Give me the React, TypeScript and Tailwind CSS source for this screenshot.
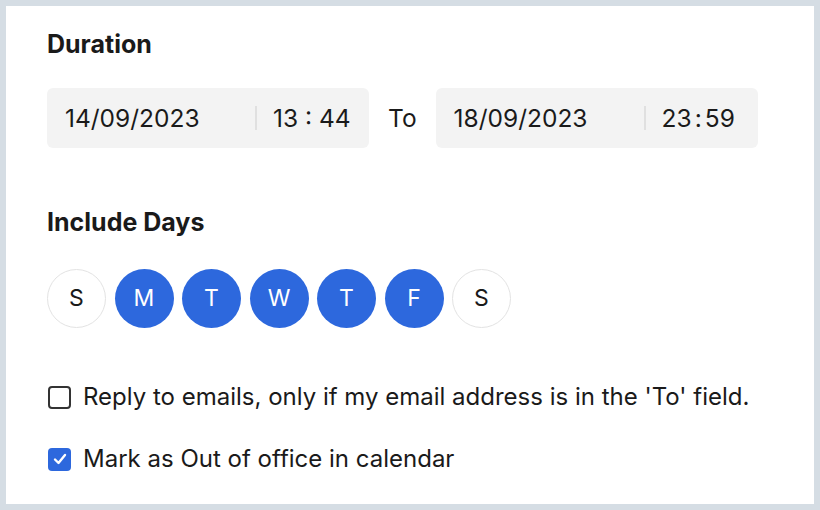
import React from "react";

const days = [
  { label: "S", on: false },
  { label: "M", on: true },
  { label: "T", on: true },
  { label: "W", on: true },
  { label: "T", on: true },
  { label: "F", on: true },
  { label: "S", on: false },
];

function DateField({ date, time }: { date: string; time: React.ReactNode }) {
  return (
    <div className="flex items-center w-[322px] h-[60px] rounded-[6px] bg-[#f3f3f3] pl-[18px] text-[24.5px] text-[#1a1a1a]">
      <span className="w-[190px]">{date}</span>
      <span className="w-[2px] h-[24px] bg-[#e0e0e0]" />
      <span className="pl-[16px]">{time}</span>
    </div>
  );
}

export default function App() {
  return (
    <div
      className="w-[820px] h-[510px] bg-[#d5dde4] p-[6px]"
      style={{ fontFamily: "Inter, 'Noto Sans', sans-serif" }}
    >
      <div className="h-full bg-white pl-[41px] pt-[22px]">
        <h2 className="text-[25px] font-bold text-[#1a1a1a] leading-[32px]">Duration</h2>
        <div className="flex items-center mt-[28px]">
          <DateField date="14/09/2023" time="13 : 44" />
          <span className="mx-[19px] text-[24.5px] text-[#1a1a1a]">To</span>
          <DateField
            date="18/09/2023"
            time={
              <>
                23<span className="mx-[3px]">:</span>59
              </>
            }
          />
        </div>

        <h2 className="mt-[58px] text-[25px] font-bold text-[#1a1a1a] leading-[32px]">Include Days</h2>
        <div className="flex gap-[8.5px] mt-[31px]">
          {days.map((d, i) => (
            <div
              key={i}
              className={
                d.on
                  ? "w-[59px] h-[59px] rounded-full bg-[#2d68dd] text-white flex items-center justify-center text-[23px]"
                  : "w-[59px] h-[59px] rounded-full border border-[#e3e3e3] text-[#1a1a1a] flex items-center justify-center text-[23px]"
              }
            >
              {d.label}
            </div>
          ))}
        </div>

        <div className="mt-[53px] flex flex-col gap-[30px] text-[24px] leading-[32px] text-[#1a1a1a]">
          <label className="flex items-center gap-[12px]">
            <span className="ml-[1px] w-[23px] h-[23px] rounded-[4px] border-2 border-[#333]" />
            <span>Reply to emails, only if my email address is in the 'To' field.</span>
          </label>
          <label className="flex items-center gap-[12px]">
            <span className="ml-[1px] w-[23px] h-[23px] rounded-[4px] bg-[#2d68dd] flex items-center justify-center">
              <svg width="16" height="16" viewBox="0 0 16 16" fill="none">
                <path d="M3 8.5 L6.5 12 L13 4" stroke="white" strokeWidth="2.4" strokeLinecap="round" strokeLinejoin="round" />
              </svg>
            </span>
            <span>Mark as Out of office in calendar</span>
          </label>
        </div>
      </div>
    </div>
  );
}
